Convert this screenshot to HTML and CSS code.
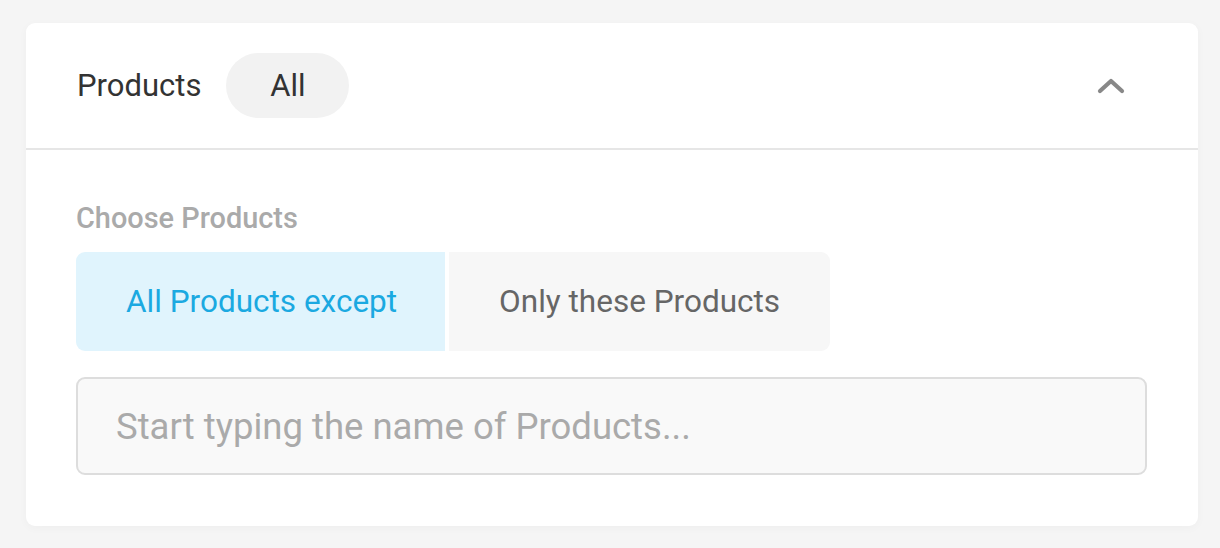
FILE: index.html
```html
<!DOCTYPE html>
<html lang="en">
<head>
<meta charset="utf-8">
<title>Products filter</title>
<link rel="stylesheet" href="styles.css">
</head>
<body>
<div class="page">
  <section class="card">
    <header class="card-header">
      <div class="title-group">
        <h2 class="title">Products</h2>
        <span class="pill">All</span>
      </div>
      <button class="collapse" aria-label="Collapse">
        <svg width="32" height="32" viewBox="0 0 32 32" aria-hidden="true">
          <path d="M5 21 L16 11 L27 21" fill="none" stroke="#888" stroke-width="4.2" stroke-linecap="round" stroke-linejoin="round"/>
        </svg>
      </button>
    </header>
    <div class="card-body">
      <div class="label">Choose Products</div>
      <div class="toggle">
        <button class="toggle-btn active">All Products except</button>
        <button class="toggle-btn">Only these Products</button>
      </div>
      <input class="search" type="text" placeholder="Start typing the name of Products...">
    </div>
  </section>
</div>
</body>
</html>
```
FILE: styles.css
```css
* { box-sizing: border-box; }
html, body { margin: 0; padding: 0; }
body {
  background: #f5f5f5;
  font-family: Roboto, "Liberation Sans", Arial, sans-serif;
  width: 1220px;
  height: 548px;
  overflow: hidden;
}
.page {
  padding: 23px 22px 22px 26px;
}
.card {
  width: 1172px;
  background: #fff;
  border-radius: 9px;
  box-shadow: 0 2px 10px rgba(0,0,0,0.03);
}
.card-header {
  height: 127px;
  border-bottom: 2px solid #e6e6e6;
  display: flex;
  align-items: center;
  justify-content: space-between;
  padding: 0 71px 0 51px;
}
.title-group {
  display: flex;
  align-items: center;
  gap: 25px;
}
.title {
  margin: 0;
  font-size: 31px;
  font-weight: 400;
  color: #333;
}
.pill {
  display: inline-flex;
  align-items: center;
  justify-content: center;
  height: 65px;
  width: 123px;
  border-radius: 33px;
  background: #f2f2f2;
  color: #333;
  font-size: 31px;
}
.collapse {
  border: 0;
  background: none;
  padding: 0;
  width: 32px;
  height: 32px;
  display: flex;
}
.card-body {
  padding: 52px 51px 51px 50px;
}
.label {
  font-size: 28.9px;
  font-weight: 500;
  color: #aaa;
  line-height: 33px;
}
.toggle {
  margin-top: 17px;
  display: flex;
  gap: 4px;
}
.toggle-btn {
  height: 99px;
  border: 0;
  padding: 0 50px;
  font-family: inherit;
  font-size: 31.5px;
  color: #666;
  background: #f7f7f7;
  border-radius: 0 9px 9px 0;
}
.toggle-btn.active {
  padding: 0 48px 0 50px;
  background: #e0f4fd;
  color: #1ba9e1;
  border-radius: 9px 0 0 9px;
}
.search {
  display: block;
  margin-top: 26px;
  width: 100%;
  height: 98px;
  border: 2px solid #ddd;
  border-radius: 9px;
  background: #f9f9f9;
  padding: 0 38px;
  font-family: inherit;
  font-size: 36.5px;
  color: #333;
  outline: none;
}
.search::placeholder {
  color: #aaa;
}
```
